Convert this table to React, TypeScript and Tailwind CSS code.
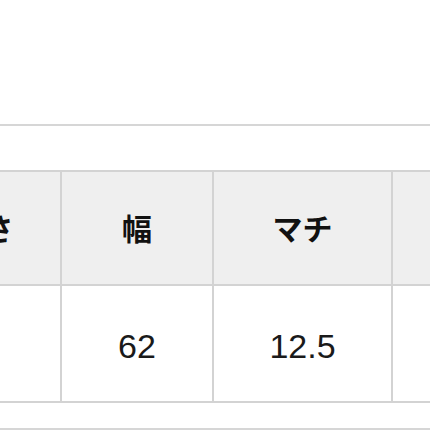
export default function App() {
  const headers = ["高さ", "幅", "マチ", ""]
  const values = ["", "62", "12.5", ""]

  return (
    <div className="w-[430px] h-[430px] overflow-hidden bg-white">
      <div className="h-[124px]" />
      <div className="h-[2px] bg-[#d6d6d6]" />
      <div className="h-[44px]" />

      {/* Size table */}
      <div className="overflow-hidden">
        <div className="-ml-[93px] w-[700px] grid grid-cols-[153px_150px_177px_216px] grid-rows-[112px_115px] gap-[2px] py-[2px] bg-[#d3d3d3]">
          {headers.map((h, i) => (
            <div
              key={i}
              className="flex items-center justify-center bg-[#efefef] pb-[2px] text-[30px] font-bold text-[#111] [font-family:'Noto_Sans_CJK_JP',sans-serif]"
            >
              {h}
            </div>
          ))}
          {values.map((v, i) => (
            <div
              key={i}
              className="flex items-center justify-center bg-white pt-[6px] text-[34px] text-[#1a1a1a] [font-family:'Liberation_Sans',Arial,sans-serif]"
            >
              {v}
            </div>
          ))}
        </div>
      </div>

      <div className="h-[25px]" />
      <div className="h-[2px] bg-[#d6d6d6]" />
    </div>
  )
}
